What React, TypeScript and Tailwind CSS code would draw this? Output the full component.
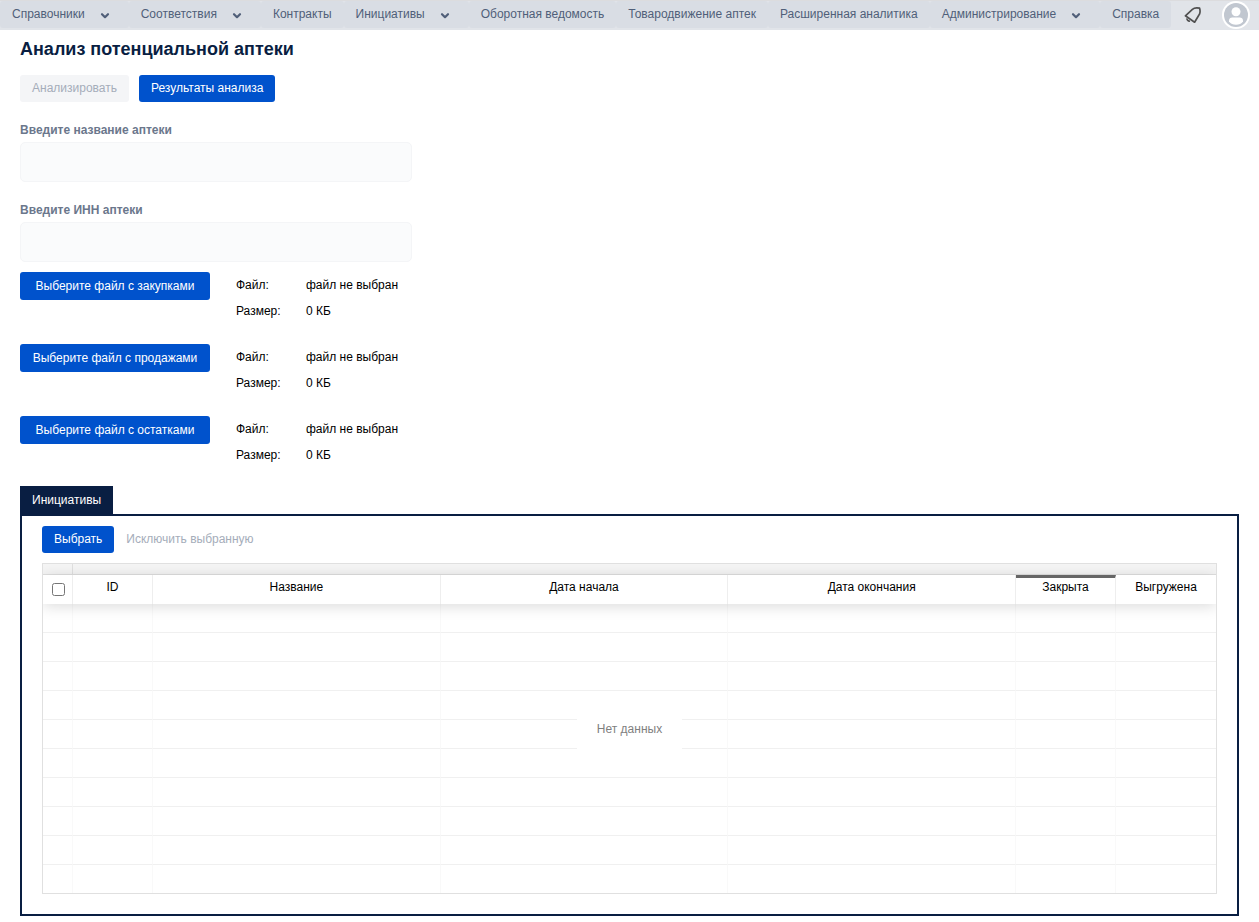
import { useState } from 'react';
import clsx from 'clsx';

interface MenuItem {
  title: string;
  hasChildren?: boolean;
}

interface FilePick {
  button: string;
  name: string;
  size: string;
}

const MENU: MenuItem[] = [
  { title: 'Справочники', hasChildren: true },
  { title: 'Соответствия', hasChildren: true },
  { title: 'Контракты' },
  { title: 'Инициативы', hasChildren: true },
  { title: 'Оборотная ведомость' },
  { title: 'Товародвижение аптек' },
  { title: 'Расширенная аналитика' },
  { title: 'Администрирование', hasChildren: true },
  { title: 'Справка' },
];

const FILES: FilePick[] = [
  { button: 'Выберите файл с закупками', name: 'файл не выбран', size: '0 КБ' },
  { button: 'Выберите файл с продажами', name: 'файл не выбран', size: '0 КБ' },
  { button: 'Выберите файл с остатками', name: 'файл не выбран', size: '0 КБ' },
];

const COLUMNS = [
  { title: 'ID', width: 'w-20' },
  { title: 'Название', width: 'w-auto' },
  { title: 'Дата начала', width: 'w-auto' },
  { title: 'Дата окончания', width: 'w-auto' },
  { title: 'Закрыта', width: 'w-[100px]', marked: true },
  { title: 'Выгружена', width: 'w-[100px]' },
];

const EMPTY_ROWS = 10;

function ChevronIcon() {
  return (
    <svg viewBox="0 0 24 24" className="ml-2 size-6 text-[#505f79]" fill="none" stroke="currentColor" strokeWidth="2.2" strokeLinecap="round" strokeLinejoin="round">
      <path d="M9 11.2l3 3 3-3" />
    </svg>
  );
}

function BellIcon() {
  return (
    <svg viewBox="0 0 18 18" className="size-[18px]" fill="none" stroke="#505050" strokeWidth="1.7" strokeLinejoin="round">
      <path d="M1.4 9.8L8.4 3.4C10 1.9 12.8 1.6 15.6 2.2C16.4 4.8 16.2 7.4 14.8 9.2L10.6 16.2Z" />
      <path d="M3 12.4C2.8 14 4.2 15.4 6 15" />
    </svg>
  );
}

function Avatar() {
  return (
    <svg viewBox="0 0 28 28" className="size-7">
      <circle cx="14" cy="14" r="14" fill="#fff" />
      <circle cx="14" cy="14" r="12" fill="#c1c7d0" />
      <circle cx="14" cy="10.7" r="4.5" fill="#fff" />
      <path d="M7 19.5C7 17.6 8.5 16.6 10.2 16.6H17.8C19.5 16.6 21 17.6 21 19.5V20.5C19.4 22.6 16.9 23.8 14 23.8S8.6 22.6 7 20.5Z" fill="#fff" />
    </svg>
  );
}

function Header() {
  return (
    <header className="flex h-[30px] items-stretch border-t border-[#dcdcde] bg-[#e1e4e9] pb-px">
      <nav className="flex pb-px">
        {MENU.map((item) => (
          <button key={item.title} type="button" className="flex items-center whitespace-nowrap rounded-[3px] bg-[#d9dde4] px-3 text-[#505f79]">
            <span className="pb-0.5">{item.title}</span>
            {item.hasChildren && <ChevronIcon />}
          </button>
        ))}
      </nav>
      <div className="ml-auto flex items-center gap-5 pr-[9px]">
        <button type="button" aria-label="Уведомления">
          <BellIcon />
        </button>
        <button type="button" aria-label="Профиль">
          <Avatar />
        </button>
      </div>
    </header>
  );
}

function TextField({ id, label }: { id: string; label: string }) {
  const [value, setValue] = useState('');

  return (
    <div className="flex w-[392px] flex-col">
      <label htmlFor={id} className="h-5 font-bold leading-4 text-[#6b778c]">
        {label}
      </label>
      <input
        id={id}
        type="text"
        value={value}
        onChange={(e) => setValue(e.target.value)}
        className="h-10 rounded-[5px] border border-[#f4f5f7] bg-[#fafbfc] px-2 text-sm outline-none"
      />
    </div>
  );
}

function InitiativesTable() {
  const [checked, setChecked] = useState(false);

  return (
    <div className="relative mt-2.5 overflow-hidden border border-[#e0e0e0]">
      <table className="w-full table-fixed border-separate border-spacing-0">
        <colgroup>
          <col className="w-[30px]" />
          {COLUMNS.map((col) => (
            <col key={col.title} className={col.width} />
          ))}
        </colgroup>
        <thead>
          <tr className="h-[11px] bg-[#f5f5f5]">
            <td className="border-b border-r border-[#e0e0e0] p-0" />
            <td colSpan={COLUMNS.length} className="border-b border-[#e0e0e0] p-0" />
          </tr>
          <tr className="relative h-[29px] bg-white shadow-[0_2px_15px_0_rgba(0,0,0,0.15)]">
            <th className="border-r border-[#eeeeee] p-0">
              <input
                type="checkbox"
                aria-label="Выбрать все"
                checked={checked}
                onChange={(e) => setChecked(e.target.checked)}
                className="ml-[9px] block size-[13px]"
              />
            </th>
            {COLUMNS.map((col) => (
              <th
                key={col.title}
                className={clsx(
                  'border-[#eeeeee] p-0 align-top font-normal not-last:border-r',
                  col.marked ? 'border-t-[3px] border-t-[#666666]' : 'pt-[3px]',
                )}
              >
                <span className="block leading-[18px]">{col.title}</span>
              </th>
            ))}
          </tr>
        </thead>
        <tbody>
          {Array.from({ length: EMPTY_ROWS }).map((_, i) => (
            <tr key={i} className="group h-[29px] last:h-7">
              <td className="border-b border-r border-b-[#f0f0f0] border-r-[#f9f9f9] p-0 group-last:border-b-0" />
              {COLUMNS.map((col) => (
                <td key={col.title} className="border-b border-b-[#f0f0f0] border-r-[#f9f9f9] p-0 not-last:border-r group-last:border-b-0" />
              ))}
            </tr>
          ))}
        </tbody>
      </table>
      {/* Centered below the group row */}
      <div className="pointer-events-none absolute inset-x-0 bottom-0 top-[11px] flex items-center justify-center">
        <span className="bg-white px-5 pb-2.5 leading-5 text-[#7f7f7f]">Нет данных</span>
      </div>
    </div>
  );
}

export default function App() {
  return (
    <div className="bg-white font-['Liberation_Sans',Arial,sans-serif] text-xs text-black">
      <Header />
      <main className="px-5 pb-1.5 pt-2">
        <h1 className="text-lg font-bold leading-[22px] text-[#091e42]">Анализ потенциальной аптеки</h1>

        <div className="mt-[15px] flex gap-2.5">
          <button type="button" disabled className="h-[27px] rounded-[3px] bg-[#f4f5f7] px-3 pb-0.5 text-[#a5adba]">
            Анализировать
          </button>
          <button type="button" className="h-[27px] rounded-[3px] bg-[#0052cc] px-3 pb-0.5 text-white">
            Результаты анализа
          </button>
        </div>

        <div className="mt-5 flex flex-col gap-5">
          <TextField id="pharmacy-name" label="Введите название аптеки" />
          <TextField id="pharmacy-inn" label="Введите ИНН аптеки" />
        </div>

        {/* Files */}
        <div className="mt-2.5 flex flex-col gap-5">
          {FILES.map((file) => (
            <div key={file.button} className="flex h-[52px] items-start">
              <button type="button" className="h-7 w-[190px] rounded-[3px] bg-[#0052cc] text-white">
                {file.button}
              </button>
              <dl className="ml-[26px] grid grid-cols-[70px_auto] leading-[26px]">
                <dt>Файл:</dt>
                <dd>{file.name}</dd>
                <dt>Размер:</dt>
                <dd>{file.size}</dd>
              </dl>
            </div>
          ))}
        </div>

        <div role="tablist" className="mt-[18px] flex">
          <button type="button" role="tab" aria-selected="true" className="h-7 bg-[#091e42] px-3 text-white">
            Инициативы
          </button>
        </div>
        <section className="border-2 border-[#091e42] px-5 pb-5 pt-2.5">
          <div className="flex">
            <button type="button" className="h-[27px] rounded-[3px] bg-[#0052cc] px-3 pb-0.5 text-white">
              Выбрать
            </button>
            <button type="button" disabled className="h-[27px] px-3 pb-0.5 text-[#a5adba]">
              Исключить выбранную
            </button>
          </div>
          <InitiativesTable />
        </section>
      </main>
    </div>
  );
}
